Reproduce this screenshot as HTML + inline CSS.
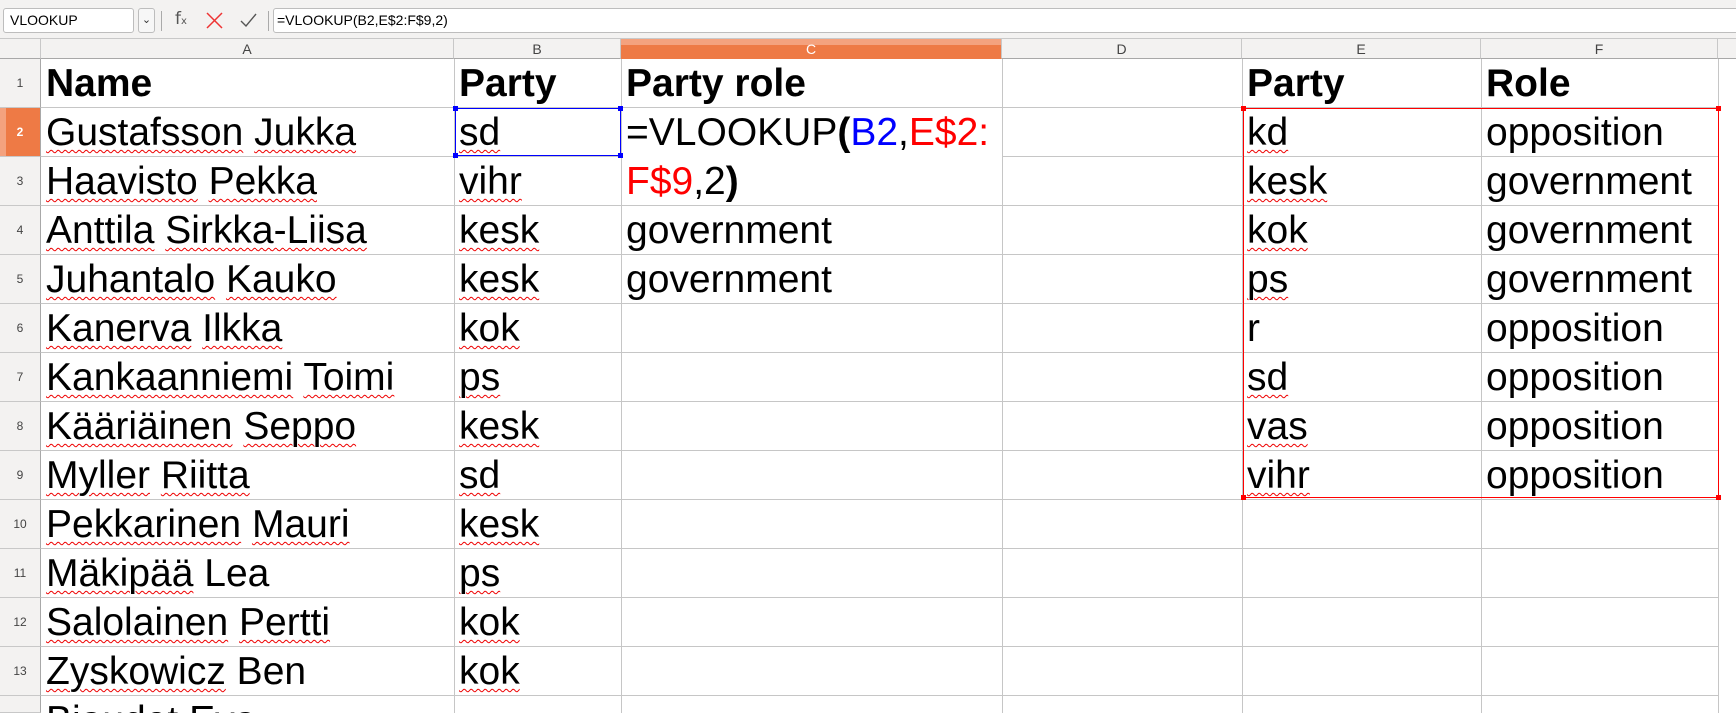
<!DOCTYPE html>
<html style="width:1736px;height:713px;overflow:hidden"><head><meta charset="utf-8"><style>
*{margin:0;padding:0;box-sizing:border-box}
body{width:1736px;height:713px;overflow:hidden;background:#fff;font-family:"Liberation Sans",sans-serif;position:relative}
.a{position:absolute}
.tb{left:0;top:0;width:1736px;height:39px;background:#f3f2f1;border-bottom:1px solid #c8c8c8}
.box{background:#fff;border:1px solid #bdbdbd;border-radius:3px}
.ch{top:39px;height:20px;background:#f3f2f1;border-right:1px solid #c8c8c8;border-bottom:1px solid #a8a8a8;font-size:14px;color:#444;text-align:center;line-height:20px}
.rh{left:0;width:41px;height:49px;background:#f3f2f1;border-right:1px solid #a8a8a8;border-bottom:1px solid #c8c8c8;font-size:12px;color:#444;text-align:center;line-height:49px}
.vl{top:59px;width:1px;height:654px;background:#c6c6c6}
.hl{left:41px;width:1677px;height:1px;background:#c6c6c6}
.t{font-size:39px;line-height:49px;height:49px;white-space:nowrap;color:#000}
.b{font-weight:bold}
.w{text-decoration:underline wavy #e00;text-decoration-thickness:1px;text-underline-offset:4px}
</style></head><body>
<div class="a tb"></div>
<div class="a box" style="left:3px;top:8px;width:131px;height:25px;font-size:14px;line-height:23px;padding-left:6px">VLOOKUP</div>
<div class="a box" style="left:138px;top:8px;width:17px;height:25px;background:#f7f7f7;font-size:11px;text-align:center;line-height:22px;color:#333">&#8964;</div>
<div class="a" style="left:161px;top:11px;width:1px;height:20px;background:#aaa"></div>
<div class="a" style="left:175px;top:9px;font-size:17px;color:#555;font-family:'DejaVu Sans',sans-serif">f<span style="font-size:10px">x</span></div>
<svg class="a" style="left:206px;top:12px" width="17" height="17"><path d="M1 1L16 16M16 1L1 16" stroke="#e33" stroke-width="1.5"/></svg>
<svg class="a" style="left:240px;top:13px" width="17" height="14"><path d="M1 8L6 13L16 1" stroke="#555" stroke-width="1.4" fill="none"/></svg>
<div class="a" style="left:268px;top:11px;width:1px;height:20px;background:#aaa"></div>
<div class="a box" style="left:273px;top:8px;width:1470px;height:25px;font-size:14px;line-height:23px;padding-left:3px">=VLOOKUP(B2,E$2:F$9,2)</div>

<div class="a ch" style="left:0;width:41px"></div>
<div class="a ch" style="left:41px;width:413px">A</div>
<div class="a ch" style="left:454px;width:167px">B</div>
<div class="a ch" style="left:621px;width:381px;background:linear-gradient(#f4a27e 0 6px,#ee7a45 6px);color:#fff;border-bottom-color:#ee7a45">C</div>
<div class="a ch" style="left:1002px;width:240px">D</div>
<div class="a ch" style="left:1242px;width:239px">E</div>
<div class="a ch" style="left:1481px;width:237px">F</div>
<div class="a ch" style="left:1718px;width:18px;border-right:none"></div>

<div class="a rh" style="top:59px">1</div>
<div class="a rh" style="top:108px;background:linear-gradient(90deg,#f4a27e 0 6px,#ee7a45 6px);color:#fff;font-weight:bold">2</div>
<div class="a rh" style="top:157px">3</div>
<div class="a rh" style="top:206px">4</div>
<div class="a rh" style="top:255px">5</div>
<div class="a rh" style="top:304px">6</div>
<div class="a rh" style="top:353px">7</div>
<div class="a rh" style="top:402px">8</div>
<div class="a rh" style="top:451px">9</div>
<div class="a rh" style="top:500px">10</div>
<div class="a rh" style="top:549px">11</div>
<div class="a rh" style="top:598px">12</div>
<div class="a rh" style="top:647px">13</div>
<div class="a rh" style="top:696px;height:17px"></div>

<div class="a vl" style="left:454px"></div>
<div class="a vl" style="left:621px"></div>
<div class="a vl" style="left:1002px"></div>
<div class="a vl" style="left:1242px"></div>
<div class="a vl" style="left:1481px"></div>
<div class="a vl" style="left:1718px"></div>
<div class="a hl" style="top:107px"></div><div class="a hl" style="top:156px"></div>
<div class="a hl" style="top:205px"></div><div class="a hl" style="top:254px"></div>
<div class="a hl" style="top:303px"></div><div class="a hl" style="top:352px"></div>
<div class="a hl" style="top:401px"></div><div class="a hl" style="top:450px"></div>
<div class="a hl" style="top:499px"></div><div class="a hl" style="top:548px"></div>
<div class="a hl" style="top:597px"></div><div class="a hl" style="top:646px"></div>
<div class="a hl" style="top:695px"></div>
<div class="a" style="left:622px;top:156px;width:380px;height:1px;background:#fff"></div>

<div class="a t b" style="left:46px;top:59px">Name</div>
<div class="a t" style="left:46px;top:108px"><span class="w">Gustafsson</span> <span class="w">Jukka</span></div>
<div class="a t" style="left:46px;top:157px"><span class="w">Haavisto</span> <span class="w">Pekka</span></div>
<div class="a t" style="left:46px;top:206px"><span class="w">Anttila</span> <span class="w">Sirkka-Liisa</span></div>
<div class="a t" style="left:46px;top:255px"><span class="w">Juhantalo</span> <span class="w">Kauko</span></div>
<div class="a t" style="left:46px;top:304px"><span class="w">Kanerva</span> <span class="w">Ilkka</span></div>
<div class="a t" style="left:46px;top:353px"><span class="w">Kankaanniemi</span> <span class="w">Toimi</span></div>
<div class="a t" style="left:46px;top:402px"><span class="w">Kääriäinen</span> <span class="w">Seppo</span></div>
<div class="a t" style="left:46px;top:451px"><span class="w">Myller</span> <span class="w">Riitta</span></div>
<div class="a t" style="left:46px;top:500px"><span class="w">Pekkarinen</span> <span class="w">Mauri</span></div>
<div class="a t" style="left:46px;top:549px"><span class="w">Mäkipää</span> Lea</div>
<div class="a t" style="left:46px;top:598px"><span class="w">Salolainen</span> <span class="w">Pertti</span></div>
<div class="a t" style="left:46px;top:647px"><span class="w">Zyskowicz</span> Ben</div>
<div class="a" style="left:41px;top:696px;width:1677px;height:17px;overflow:hidden"><div class="t" style="margin-left:5px">Biaudet Eva</div></div>

<div class="a t b" style="left:459px;top:59px">Party</div>
<div class="a t" style="left:459px;top:108px"><span class="w">sd</span></div>
<div class="a t" style="left:459px;top:157px"><span class="w">vihr</span></div>
<div class="a t" style="left:459px;top:206px"><span class="w">kesk</span></div>
<div class="a t" style="left:459px;top:255px"><span class="w">kesk</span></div>
<div class="a t" style="left:459px;top:304px"><span class="w">kok</span></div>
<div class="a t" style="left:459px;top:353px"><span class="w">ps</span></div>
<div class="a t" style="left:459px;top:402px"><span class="w">kesk</span></div>
<div class="a t" style="left:459px;top:451px"><span class="w">sd</span></div>
<div class="a t" style="left:459px;top:500px"><span class="w">kesk</span></div>
<div class="a t" style="left:459px;top:549px"><span class="w">ps</span></div>
<div class="a t" style="left:459px;top:598px"><span class="w">kok</span></div>
<div class="a t" style="left:459px;top:647px"><span class="w">kok</span></div>

<div class="a t b" style="left:626px;top:59px">Party role</div>
<div class="a t" style="left:626px;top:108px">=VLOOKUP<b>(</b><span style="color:#00f">B2</span>,<span style="color:#f00">E$2:</span></div>
<div class="a t" style="left:626px;top:157px"><span style="color:#f00">F$9</span>,2<b>)</b></div>
<div class="a t" style="left:626px;top:206px">government</div>
<div class="a t" style="left:626px;top:255px">government</div>

<div class="a t b" style="left:1247px;top:59px">Party</div>
<div class="a t b" style="left:1486px;top:59px">Role</div>
<div class="a t" style="left:1247px;top:108px"><span class="w">kd</span></div>
<div class="a t" style="left:1247px;top:157px"><span class="w">kesk</span></div>
<div class="a t" style="left:1247px;top:206px"><span class="w">kok</span></div>
<div class="a t" style="left:1247px;top:255px"><span class="w">ps</span></div>
<div class="a t" style="left:1247px;top:304px">r</div>
<div class="a t" style="left:1247px;top:353px"><span class="w">sd</span></div>
<div class="a t" style="left:1247px;top:402px"><span class="w">vas</span></div>
<div class="a t" style="left:1247px;top:451px"><span class="w">vihr</span></div>
<div class="a t" style="left:1486px;top:108px">opposition</div>
<div class="a t" style="left:1486px;top:157px">government</div>
<div class="a t" style="left:1486px;top:206px">government</div>
<div class="a t" style="left:1486px;top:255px">government</div>
<div class="a t" style="left:1486px;top:304px">opposition</div>
<div class="a t" style="left:1486px;top:353px">opposition</div>
<div class="a t" style="left:1486px;top:402px">opposition</div>
<div class="a t" style="left:1486px;top:451px">opposition</div>

<div class="a" style="left:455px;top:108px;width:166px;height:48px;border:1.5px solid #00f"></div>
<div class="a" style="left:453px;top:106px;width:5px;height:5px;background:#00f"></div>
<div class="a" style="left:618px;top:106px;width:5px;height:5px;background:#00f"></div>
<div class="a" style="left:453px;top:153px;width:5px;height:5px;background:#00f"></div>
<div class="a" style="left:618px;top:153px;width:5px;height:5px;background:#00f"></div>
<div class="a" style="left:1243px;top:108px;width:476px;height:390px;border:1.5px solid #f00"></div>
<div class="a" style="left:1241px;top:106px;width:5px;height:5px;background:#f00"></div>
<div class="a" style="left:1716px;top:106px;width:5px;height:5px;background:#f00"></div>
<div class="a" style="left:1241px;top:495px;width:5px;height:5px;background:#f00"></div>
<div class="a" style="left:1716px;top:495px;width:5px;height:5px;background:#f00"></div>
</body></html>
